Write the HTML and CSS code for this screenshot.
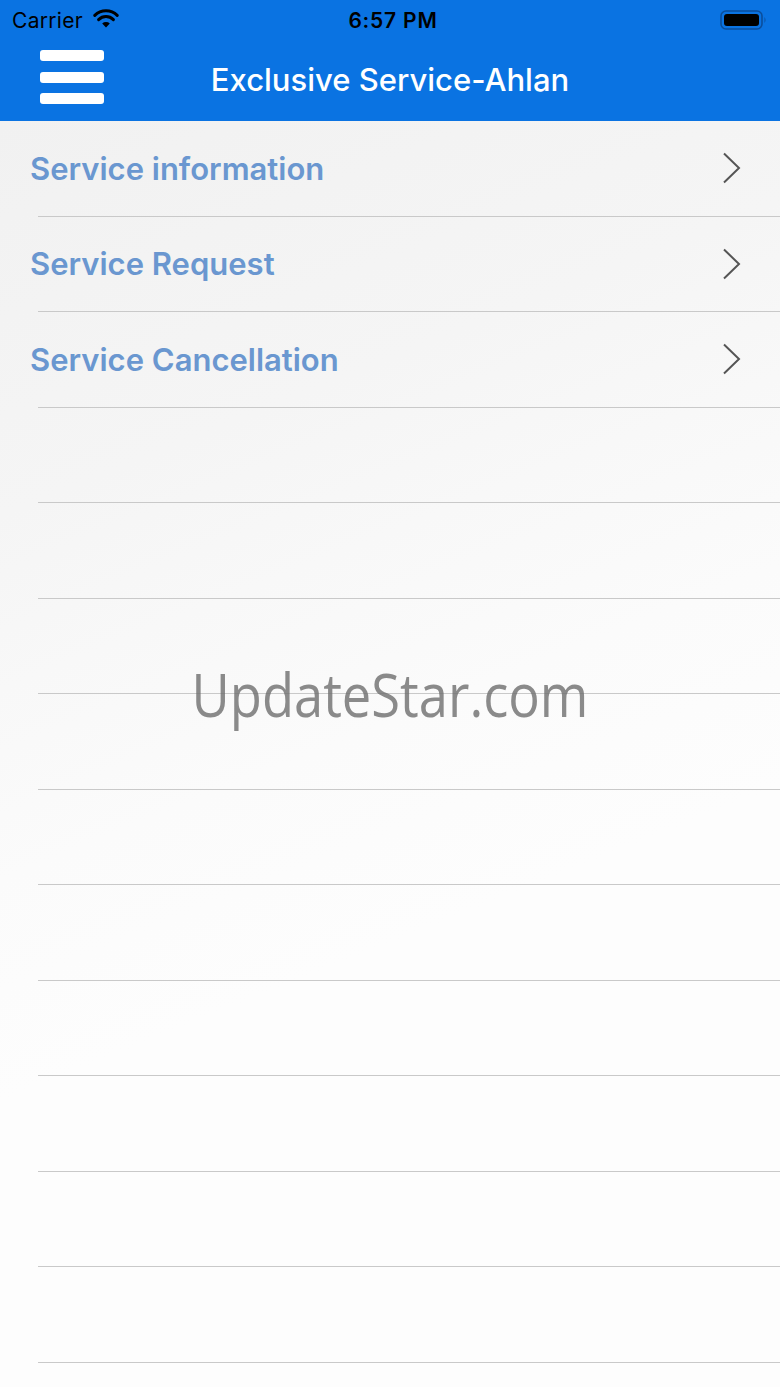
FILE: index.html
```html
<!DOCTYPE html>
<html lang="en">
<head>
    <meta charset="UTF-8">
    <meta name="viewport" content="width=device-width, initial-scale=1.0">
    <title>Exclusive Service-Ahlan</title>
    <link rel="stylesheet" href="styles.css">
</head>
<body>

    <!-- Barra azul: status + navegação -->
    <header class="topo">
        <div class="status">
            <div class="status-left">
                <span>Carrier</span>
                <svg class="wifi" width="26" height="19" viewBox="0 0 26 19">
                    <path d="M13 18.5 L9.2 14.4 A5.6 5.6 0 0 1 16.8 14.4 Z" fill="#000"/>
                    <path d="M5.6 10.6 A10.6 10.6 0 0 1 20.4 10.6" fill="none" stroke="#000" stroke-width="3" stroke-linecap="round"/>
                    <path d="M1.8 6.4 A16 16 0 0 1 24.2 6.4" fill="none" stroke="#000" stroke-width="3" stroke-linecap="round"/>
                </svg>
            </div>
            <div class="hora">6:57 PM</div>
            <div class="status-right">
                <svg width="48" height="22" viewBox="0 0 48 22">
                    <rect x="1" y="2" width="41" height="18" rx="5" fill="none" stroke="#0a4e9c" stroke-width="1.6"/>
                    <rect x="4" y="5" width="35" height="12" rx="3" fill="#000"/>
                    <path d="M44.5 8 Q46.5 11 44.5 14 Z" fill="#0a4e9c"/>
                </svg>
            </div>
        </div>
        <nav class="navbar">
            <div class="menu">
                <span></span>
                <span></span>
                <span></span>
            </div>
            <h1>Exclusive Service-Ahlan</h1>
        </nav>
    </header>

    <main class="lista">
        <div class="item">
            <span class="texto">Service information</span>
            <svg class="seta" width="20" height="32" viewBox="0 0 20 32"><path d="M2 1.5 L17 16 L2 30.5" fill="none" stroke="#555" stroke-width="2"/></svg>
        </div>
        <div class="item">
            <span class="texto">Service Request</span>
            <svg class="seta" width="20" height="32" viewBox="0 0 20 32"><path d="M2 1.5 L17 16 L2 30.5" fill="none" stroke="#555" stroke-width="2"/></svg>
        </div>
        <div class="item">
            <span class="texto">Service Cancellation</span>
            <svg class="seta" width="20" height="32" viewBox="0 0 20 32"><path d="M2 1.5 L17 16 L2 30.5" fill="none" stroke="#555" stroke-width="2"/></svg>
        </div>
        <!-- linhas vazias -->
        <div class="item"></div>
        <div class="item"></div>
        <div class="item"></div>
        <div class="item"></div>
        <div class="item"></div>
        <div class="item"></div>
        <div class="item"></div>
        <div class="item"></div>
        <div class="item"></div>
        <div class="item"></div>

        <div class="marca">UpdateStar.com</div>
    </main>

</body>
</html>
```

FILE: styles.css
```css
body {
    margin: 0;
    font-family: Inter, "Noto Sans", sans-serif;
    background: #fcfcfc;
    height: 1387px;
    overflow: hidden;
}

.topo {
    background-color: #0a73e2;
    height: 121px;
}

.status {
    height: 40px;
    display: flex;
    align-items: center;
    justify-content: space-between;
    padding: 0 12px;
    font-size: 21px;
    letter-spacing: 0.3px;
    color: #000;
}

.status-left {
    display: flex;
    align-items: center;
    gap: 10px;
    width: 150px;
}

.wifi {
    margin-top: -4px;
}

.hora {
    font-weight: 600;
    letter-spacing: 0.8px;
    margin-left: 6px;
}

.status-right {
    width: 150px;
    display: flex;
    justify-content: flex-end;
}

.navbar {
    height: 81px;
    display: flex;
    align-items: center;
    position: relative;
}

.menu {
    position: absolute;
    left: 40px;
    top: 10px;
    display: flex;
    flex-direction: column;
    gap: 10.5px;
}

.menu span {
    display: block;
    width: 64px;
    height: 11px;
    border-radius: 3px;
    background: #fff;
}

.navbar h1 {
    margin: 0 auto;
    color: #fff;
    font-size: 31px;
    font-weight: 500;
    padding-bottom: 2px;
}

.lista {
    position: relative;
    height: 1266px;
    background:
        linear-gradient(158deg, #f1f1f1 0%, #f5f5f5 25%, #f8f8f8 36%, #fbfbfb 48%, #fdfdfd 62%, #fdfdfd 100%);
}

.item {
    height: 94.5px;
    margin-left: 38px;
    border-bottom: 1px solid #c9c9c9;
    display: flex;
    align-items: center;
    justify-content: space-between;
}

.texto {
    margin-left: -8px;
    color: #6a97d0;
    font-size: 31px;
    font-weight: 600;
}

.seta {
    margin-right: 38px;
}

.marca {
    position: absolute;
    top: 542px;
    left: 0;
    right: 0;
    text-align: center;
    font-family: "Open Sans", sans-serif;
    font-size: 61px;
    line-height: 1;
    color: rgba(110,110,110,0.8);
    transform: scaleX(0.86);
}
```
